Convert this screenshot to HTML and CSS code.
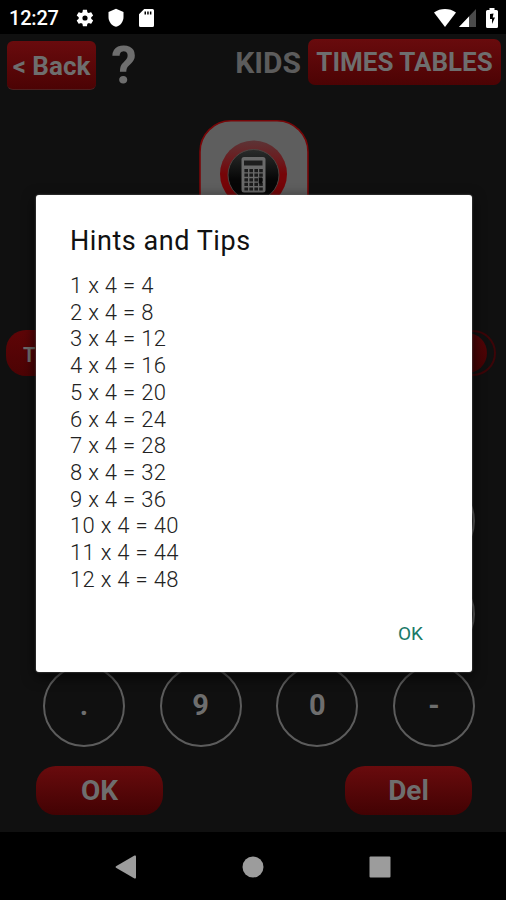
FILE: index.html
```
<!DOCTYPE html>
<html lang="en">
<head>
    <meta charset="UTF-8">
    <meta name="viewport" content="width=device-width, initial-scale=1.0">
    <title>Kids Times Tables</title>
    <link rel="stylesheet" href="styles.css">
</head>
<body>
    <div class="status-bar">
        <span class="clock">12:27</span>
        <svg class="icon-gear" width="20" height="20" viewBox="0 0 24 24"><path fill="#fff" fill-rule="evenodd" d="M19.4 13c.1-.3.1-.6.1-1s0-.7-.1-1l2.1-1.6c.2-.2.3-.4.1-.6l-2-3.5c-.1-.2-.4-.3-.6-.2l-2.5 1c-.5-.4-1.100-.7-1.700-1l-.4-2.600c0-.3-.2-.5-.5-.5h-4c-.2 0-.4.2-.5.5L9 5.100c-.6.300-1.200.6-1.700 1l-2.500-1c-.2-.1-.5 0-.6.200l-2 3.500c-.1.200-.1.400.1.600L4.500 11c-.1.300-.1.600-.1 1s0 .7.1 1l-2.200 1.600c-.2.200-.2.400-.1.600l2 3.500c.1.200.4.300.6.200l2.500-1c.5.400 1.100.7 1.700 1l.4 2.600c.1.300.3.500.5.500h4c.3 0 .5-.2.500-.5l.4-2.600c.6-.3 1.200-.6 1.700-1l2.500 1c.2.100.5 0 .6-.2l2-3.500c.1-.2.100-.4-.1-.6zM12 15.100a3.100 3.100 0 1 1 0-6.200 3.100 3.100 0 0 1 0 6.200z"/></svg>
        <svg class="icon-shield" width="18" height="20" viewBox="0 0 18 20"><path fill="#fff" d="M9 .8l7.500 3.200v5c0 4.800-3 8.500-7.500 9.800C4.500 17.500 1.500 13.800 1.500 9V4z"/></svg>
        <svg class="icon-sd" width="15" height="18" viewBox="0 0 15 18"><path fill="#fff" fill-rule="evenodd" d="M5.200 0H13.500a1.500 1.500 0 0 1 1.500 1.500v15a1.500 1.500 0 0 1-1.500 1.500h-12A1.500 1.500 0 0 1 0 16.500V5.200zM5.500 2.500v3h1.500v-3zM8.200 2.500v3h1.500v-3zM10.900 2.500v3h1.500v-3z"/></svg>
        <div class="status-right">
            <svg width="22" height="18" viewBox="0 0 22 18"><path fill="#fff" d="M0 3.500C6.500-1.100 15.500-1.100 22 3.500L11 18z"/></svg>
            <svg class="icon-signal" width="17" height="18" viewBox="0 0 17 18"><path fill="#4a4a4a" d="M17 0v18H0z"/><path fill="#fff" d="M10 7.400V18H0z"/></svg>
            <svg class="icon-battery" width="12" height="20" viewBox="0 0 12 20"><path fill="#fff" d="M3.500 0h5v2H10.500A1.500 1.500 0 0 1 12 3.500v15a1.500 1.500 0 0 1-1.500 1.500h-9A1.500 1.500 0 0 1 0 18.500v-15A1.500 1.500 0 0 1 1.500 2h2z"/><path fill="#000" d="M7.500 5.500L4 6v5h2v5l3-6.500H6.700z"/></svg>
        </div>
    </div>

    <main class="app">
        <header class="header">
            <div class="back-btn">&lt; Back</div>
            <div class="help">?</div>
            <div class="title">
                <span class="kids">KIDS</span>
                <span class="tables">TIMES TABLES</span>
            </div>
        </header>

        <div class="logo">
            <svg width="110" height="110" viewBox="0 0 110 110">
                <defs>
                    <linearGradient id="ring" x1="0" y1="0" x2="0" y2="1">
                        <stop offset="0" stop-color="#5c3436"/>
                        <stop offset=".3" stop-color="#6c1a1d"/>
                        <stop offset=".5" stop-color="#760508"/>
                    </linearGradient>
                    <linearGradient id="disc" x1="0" y1="0" x2="0" y2="1">
                        <stop offset="0" stop-color="#2a2c2b"/>
                        <stop offset=".6" stop-color="#060606"/>
                    </linearGradient>
                </defs>
                <rect x="1" y="0.800" width="108" height="108" rx="31" fill="#5e5e5e" stroke="#780608" stroke-width="1.600"/>
                <circle cx="54.500" cy="54" r="33.500" fill="url(#ring)"/>
                <circle cx="54.500" cy="55" r="25.500" fill="url(#disc)" stroke="#4c4542" stroke-width="1"/>
                <rect x="42.500" y="37" width="24" height="35.500" rx="2.500" fill="#6a6a6a"/>
                <rect x="45" y="40.500" width="18.500" height="5" fill="#1e1e1e"/>
                <path d="M47.200 49v22M52.200 49v22M57.200 49v22M62 49v22" stroke="#1b1b1b" stroke-width="3.600" stroke-dasharray="3.200 1.400"/>
                <path d="M61.500 57.500v6" stroke="#0a0a0a" stroke-width="3.500"/>
            </svg>
        </div>

        <div class="mode-row">
            <div class="mode-btn">T</div>
            <div class="switch"><div class="switch-thumb"></div></div>
        </div>

        <div class="keypad">
            <div class="key"></div>
            <div class="key"></div>
            <div class="key"></div>
            <div class="key"></div>
            <div class="key"></div>
            <div class="key"></div>
            <div class="key"></div>
            <div class="key"></div>
            <div class="key">.</div>
            <div class="key">9</div>
            <div class="key">0</div>
            <div class="key">-</div>
        </div>

        <div class="actions">
            <div class="action-btn">OK</div>
            <div class="action-btn">Del</div>
        </div>
    </main>

    <div class="dialog">
        <h1>Hints and Tips</h1>
        <ul class="hints">
            <li>1 x 4 = 4</li>
            <li>2 x 4 = 8</li>
            <li>3 x 4 = 12</li>
            <li>4 x 4 = 16</li>
            <li>5 x 4 = 20</li>
            <li>6 x 4 = 24</li>
            <li>7 x 4 = 28</li>
            <li>8 x 4 = 32</li>
            <li>9 x 4 = 36</li>
            <li>10 x 4 = 40</li>
            <li>11 x 4 = 44</li>
            <li>12 x 4 = 48</li>
        </ul>
        <div class="dialog-ok">OK</div>
    </div>

    <nav class="nav-bar">
        <svg width="22" height="24" viewBox="0 0 22 24"><path fill="#9c9c9c" d="M1 11.200L19.500.6Q21 0 21 1.600v20.800q0 1.600-1.500 1L1 12.800Q0 12 1 11.200z"/></svg>
        <svg width="22" height="22" viewBox="0 0 22 22"><circle cx="11" cy="11" r="10.500" fill="#9c9c9c"/></svg>
        <svg width="22" height="22" viewBox="0 0 22 22"><rect x=".5" y=".5" width="21" height="21" rx="1" fill="#9c9c9c"/></svg>
    </nav>
</body>
</html>
```
FILE: styles.css
```
* {
    margin: 0;
    padding: 0;
    box-sizing: border-box;
}

body {
    position: relative;
    width: 506px;
    height: 900px;
    overflow: hidden;
    display: flex;
    flex-direction: column;
    background: #000;
    font-family: Roboto, sans-serif;
}

svg {
    display: block;
    flex-shrink: 0;
}

.status-bar {
    height: 34px;
    padding: 1px 8px 0 9px;
    display: flex;
    align-items: center;
}

.clock {
    width: 50px;
    color: #fff;
    font-size: 20px;
    font-weight: 500;
    letter-spacing: -0.2px;
    white-space: nowrap;
}

.icon-gear {
    margin-left: 16px;
}

.icon-shield {
    margin-left: 12px;
}

.icon-sd {
    margin-left: 14px;
}

.status-right {
    margin-left: auto;
    display: flex;
    align-items: center;
}

.icon-signal {
    margin-left: 3px;
}

.icon-battery {
    margin-left: 10px;
}

.app {
    height: 798px;
    background: #101010;
    color: #6e6e6e;
    font-weight: 700;
}

.header {
    height: 86px;
    padding: 5px 5px 0 7px;
    display: flex;
    align-items: flex-start;
}

.back-btn {
    width: 89px;
    height: 49px;
    margin-top: 2px;
    border-radius: 6px;
    border-bottom: 1px solid #4c2020;
    background: linear-gradient(#690b0d, #4c0304);
    font-size: 26px;
    line-height: 51px;
    text-align: center;
    white-space: nowrap;
}

.help {
    width: 30px;
    margin-left: 13px;
    font-size: 51px;
    line-height: 53px;
    text-align: center;
}

.title {
    margin-left: auto;
    display: flex;
}

.kids {
    margin-right: 7px;
    color: #5c5c5c;
    font-size: 30px;
    line-height: 47px;
}

.tables {
    width: 193px;
    height: 46px;
    border-radius: 7px;
    background: linear-gradient(#690b0d, #4c0304);
    font-size: 26px;
    line-height: 46px;
    text-align: center;
    white-space: nowrap;
}

.logo {
    height: 210px;
    padding-left: 199px;
}

.mode-row {
    height: 46px;
    padding: 0 10px 0 6px;
    display: flex;
    justify-content: space-between;
}

.mode-btn {
    width: 180px;
    padding-left: 17px;
    border-radius: 20px;
    background: linear-gradient(#5e0507, #4c0304);
    font-size: 20px;
    line-height: 50px;
}

.switch {
    width: 100px;
    padding: 1px 7px 1px 2px;
    border: 2px solid #3c0508;
    border-radius: 23px;
    display: flex;
    justify-content: flex-end;
}

.switch-thumb {
    width: 40px;
    border-radius: 50%;
    background: linear-gradient(#520507, #440304);
}

.keypad {
    margin-top: 104px;
    padding: 0 31px 0 43px;
    display: grid;
    grid-template-columns: repeat(4, 82px);
    justify-content: space-between;
    row-gap: 10.5px;
}

.key {
    height: 82px;
    border: 2.5px solid #5c5c5c;
    border-radius: 50%;
    font-size: 29px;
    line-height: 76px;
    text-align: center;
}

.actions {
    margin-top: 19px;
    padding: 0 34px 0 36px;
    display: flex;
    justify-content: space-between;
}

.action-btn {
    width: 127px;
    height: 49px;
    border-radius: 20px;
    background: linear-gradient(#690b0d, #420203);
    font-size: 28px;
    line-height: 50px;
    text-align: center;
}

/* dialog lies over the dimmed app */
.dialog {
    position: absolute;
    left: 36px;
    top: 195px;
    width: 436px;
    height: 477px;
    padding: 28px 34px;
    border-radius: 3px;
    background: #fff;
    box-shadow: 0 0 2px #777, 0 4px 14px rgba(0, 0, 0, 0.8);
}

.dialog h1 {
    color: #111;
    font-size: 27px;
    font-weight: 400;
    letter-spacing: 0.55px;
    line-height: 36px;
    white-space: nowrap;
}

.hints {
    margin-top: 14px;
    list-style: none;
    color: #222;
    font-size: 22px;
    font-weight: 300;
    letter-spacing: 0.3px;
    line-height: 26.7px;
}

.dialog-ok {
    margin: 29px 15px 0 0;
    color: #197a68;
    font-size: 19px;
    line-height: 24px;
    text-align: right;
}

.nav-bar {
    height: 68px;
    padding: 2px 115px 0;
    display: flex;
    align-items: center;
    justify-content: space-between;
}
```
